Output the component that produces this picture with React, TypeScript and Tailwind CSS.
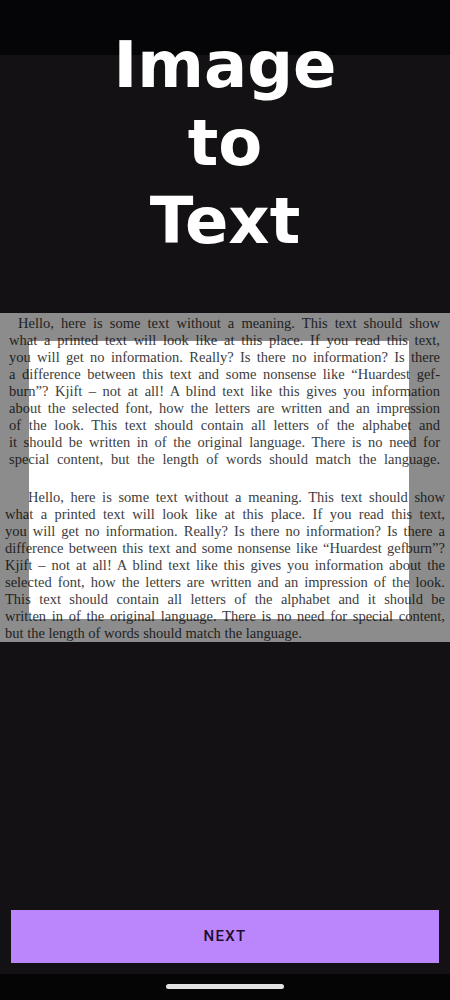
const PARA_ONE = [
  "Hello, here is some text without a meaning. This text should show",
  "what a printed text will look like at this place. If you read this text,",
  "you will get no information. Really? Is there no information? Is there",
  "a difference between this text and some nonsense like “Huardest gef-",
  "burn”? Kjift – not at all! A blind text like this gives you information",
  "about the selected font, how the letters are written and an impression",
  "of the look. This text should contain all letters of the alphabet and",
  "it should be written in of the original language. There is no need for",
  "special content, but the length of words should match the language.",
];

const PARA_TWO = [
  "Hello, here is some text without a meaning. This text should show",
  "what a printed text will look like at this place. If you read this text,",
  "you will get no information. Really? Is there no information? Is there a",
  "difference between this text and some nonsense like “Huardest gefburn”?",
  "Kjift – not at all! A blind text like this gives you information about the",
  "selected font, how the letters are written and an impression of the look.",
  "This text should contain all letters of the alphabet and it should be",
  "written in of the original language. There is no need for special content,",
];

function Paragraph({
  lines,
  lastLine,
  indent,
  className,
}: {
  lines: string[];
  lastLine?: string;
  indent: string;
  className?: string;
}) {
  return (
    <div className={className}>
      {lines.map((line, i) => (
        <div
          key={i}
          className={
            i === 0
              ? `whitespace-nowrap text-justify [text-align-last:justify] ${indent}`
              : "whitespace-nowrap text-justify [text-align-last:justify]"
          }
        >
          {line}
        </div>
      ))}
      {lastLine ? <div className="whitespace-nowrap">{lastLine}</div> : null}
    </div>
  );
}

export default function App() {
  return (
    <div className="flex h-[1000px] w-[450px] flex-col overflow-hidden bg-[#131114]">
      <div className="h-[55px] shrink-0 bg-[#050407]" />

      <h1 className="relative -mt-[29px] text-center font-['DejaVu_Sans',sans-serif] text-[64px] font-bold leading-[78px] text-white">
        <span className="block">Image</span>
        <span className="block">to</span>
        <span className="block">Text</span>
      </h1>

      {/* scanned page with crop window */}
      <div className="relative mt-[53px] h-[329px] overflow-hidden bg-white font-['Liberation_Serif',serif] text-[14.5px] leading-[17px] text-[#3d3d3d]">
        <Paragraph
          lines={PARA_ONE}
          indent="pl-[9px]"
          className="pl-[9px] pr-[10px] pt-[2px]"
        />
        <Paragraph
          lines={PARA_TWO}
          indent="pl-[23px]"
          lastLine="but the length of words should match the language."
          className="mt-[21px] pl-[5px] pr-[5px]"
        />
        <div className="absolute left-[29px] top-[28px] h-[278px] w-[380px] shadow-[0_0_0_9999px_rgba(0,0,0,0.45)]" />
      </div>

      <div className="flex-1" />

      <button className="mx-[11px] mb-[11px] flex h-[53px] shrink-0 items-center justify-center bg-[#bb86fc] font-['Roboto',sans-serif] text-[15px] font-medium tracking-[1.3px] text-[#1d0d2c]">
        NEXT
      </button>

      <div className="flex h-[26px] shrink-0 justify-center bg-[#050505] pt-[10px]">
        <div className="h-[5px] w-[118px] rounded-full bg-[#e2e2e2]" />
      </div>
    </div>
  );
}
